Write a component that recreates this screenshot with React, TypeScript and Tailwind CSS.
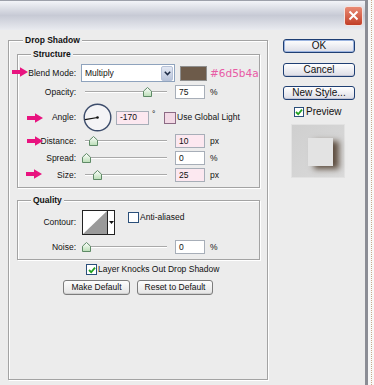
import React from "react";

const font = { fontFamily: '"Liberation Sans", Arial, sans-serif' };

function Arrow({ className }: { className: string }) {
  return (
    <svg className={`absolute ${className}`} width="16" height="10" viewBox="0 0 16 10">
      <path d="M0 3 H8 V0.2 L16 5 L8 9.8 V7 H0 Z" fill="#e8137f" />
    </svg>
  );
}

function Legend({ text, left }: { text: string; left: string }) {
  return (
    <span className={`absolute top-[-7px] ${left} px-[2px] bg-[#ececec] text-[8.5px] font-bold leading-[12px] text-[#111]`}>
      {text}
    </span>
  );
}

function Label({ text }: { text: string }) {
  return <span className="w-[58px] shrink-0 text-right text-[8.5px] leading-none text-[#111]">{text}</span>;
}

function Slider({ thumb }: { thumb: number }) {
  return (
    <div className="relative ml-[5px] h-[14px] w-[90px] shrink-0">
      <div className="absolute left-[4px] right-[4px] top-[6px] h-[2px] border-t border-[#a9a9a9] bg-white" />
      <svg className="absolute top-[2px]" style={{ left: thumb - 4 }} width="9" height="10" viewBox="0 0 9 10">
        <defs>
          <linearGradient id="tg" x1="0" y1="0" x2="0" y2="1">
            <stop offset="0" stopColor="#ffffff" />
            <stop offset="1" stopColor="#b9ddb5" />
          </linearGradient>
        </defs>
        <path d="M4.5 0.5 L8.5 4.2 V9.5 H0.5 V4.2 Z" fill="url(#tg)" stroke="#5e8a66" strokeWidth="1" />
      </svg>
    </div>
  );
}

function NumInput({ value, w, pink }: { value: string; w: string; pink?: boolean }) {
  return (
    <div
      className={`ml-[4px] flex h-[14px] ${w} shrink-0 items-center border border-[#a7aeb8] pl-[3px] text-[8.5px] leading-none text-[#111] ${
        pink ? "bg-[#fce8f0]" : "bg-white"
      }`}
    >
      {value}
    </div>
  );
}

function Unit({ text }: { text: string }) {
  return <span className="ml-[5px] text-[8.5px] leading-none text-[#111]">{text}</span>;
}

function Check({ checked, pink, size }: { checked?: boolean; pink?: boolean; size: string }) {
  return (
    <span
      className={`${size} shrink-0 flex items-center justify-center border ${
        pink ? "border-[#8c6a84] bg-[#f2d9e5]" : "border-[#2a4f7a] bg-white"
      }`}
    >
      {checked && (
        <svg width="8" height="8" viewBox="0 0 8 8">
          <path d="M1 4 L3.2 6.2 L7 1.6" fill="none" stroke="#21a121" strokeWidth="1.8" />
        </svg>
      )}
    </span>
  );
}

function XpButton({ text, mt, primary }: { text: string; mt: string; primary?: boolean }) {
  return (
    <div
      className={`${mt} flex h-[14px] w-[72px] items-center justify-center rounded-[3px] border border-[#1f3f73] bg-gradient-to-b from-white to-[#dcdde6] text-[10px] leading-none text-[#111] ${
        primary ? "shadow-[inset_0_0_0_1px_#9bb4e0]" : "shadow-[inset_0_-1px_0_#c3c6d6]"
      }`}
    >
      {text}
    </div>
  );
}

function GrayButton({ text, w, ml }: { text: string; w: string; ml?: string }) {
  return (
    <div
      className={`${ml ?? ""} flex h-[15px] ${w} items-center justify-center rounded-[3px] border border-[#7c7c7c] bg-gradient-to-b from-[#fdfdfd] to-[#e4e4e4] text-[8.5px] leading-none text-[#111] shadow-[inset_0_-1px_0_#cfcfcf]`}
    >
      {text}
    </div>
  );
}

export default function App() {
  return (
    <div className="relative flex h-[385px] w-[374px] overflow-hidden bg-[#ececec]" style={font}>
      {/* Fenêtre */}
      <div className="flex h-full w-[368px] flex-col border-r-[3px] border-[#8b8d95]">
        {/* Barre de titre */}
        <div className="flex h-[30px] items-center justify-end border-t border-[#9da0aa] bg-gradient-to-b from-[#f3f4f8] via-[#c7cad5] to-[#e9ebf0] pr-[2px]">
          <div className="flex h-[20px] w-[19px] items-center justify-center rounded-[3px] border border-[#f3e3e0] bg-gradient-to-b from-[#e98a74] to-[#c13d26]">
            <svg width="11" height="11" viewBox="0 0 11 11">
              <path d="M1.5 1.5 L9.5 9.5 M9.5 1.5 L1.5 9.5" stroke="#fff" strokeWidth="2" />
            </svg>
          </div>
        </div>

        <div className="flex pl-[8px] pt-[10px]">
          {/* Drop Shadow */}
          <div className="relative h-[340px] w-[260px] shrink-0 border border-[#a3a3a3] px-[8px] pt-[13px] shadow-[inset_1px_1px_0_#fff,1px_1px_0_#fff]">
            <Legend text="Drop Shadow" left="left-[14px]" />

            {/* Structure */}
            <div className="relative ml-[0px] w-[243px] border border-[#a3a3a3] pb-[5px] pt-[9px] shadow-[inset_1px_1px_0_#fff,1px_1px_0_#fff]">
              <Legend text="Structure" left="left-[13px]" />

              <div className="flex h-[18px] items-center">
                <Label text="Blend Mode:" />
                <div className="ml-[5px] flex h-[18px] w-[94px] shrink-0 items-center justify-between border border-[#8fa3bd] bg-white pl-[3px] pr-px">
                  <span className="text-[8.5px] leading-none text-[#111]">Multiply</span>
                  <span className="flex h-[15px] w-[12px] items-center justify-center rounded-[2px] border border-[#b7c2d8] bg-gradient-to-b from-[#e3e8f3] to-[#b9c4da]">
                    <svg width="7" height="5" viewBox="0 0 7 5">
                      <path d="M0.8 0.8 L3.5 3.6 L6.2 0.8" fill="none" stroke="#1c2a44" strokeWidth="1.5" />
                    </svg>
                  </span>
                </div>
                <span className="ml-[5px] h-[15px] w-[27px] shrink-0 border border-[#8f8f8f] bg-[#6d5b4a]" />
                <span
                  className="ml-[3px] whitespace-nowrap text-[10.5px] leading-none text-[#e85ba5]"
                  style={{ fontFamily: '"DejaVu Sans", Verdana, sans-serif' }}
                >
                  #6d5b4a
                </span>
              </div>

              <div className="mt-[3px] flex h-[14px] items-center">
                <Label text="Opacity:" />
                <Slider thumb={66} />
                <NumInput value="75" w="w-[30px]" />
                <Unit text="%" />
              </div>

              <div className="mt-[4px] flex h-[29px] items-center">
                <Label text="Angle:" />
                <svg className="ml-[7px] shrink-0" width="29" height="29" viewBox="0 0 29 29">
                  <circle cx="14.5" cy="14.5" r="13.3" fill="#f4f4f6" stroke="#3d4d6c" strokeWidth="1.4" />
                  <path d="M14.5 14.5 L2 16.7" stroke="#111" strokeWidth="1.2" />
                  <circle cx="14.5" cy="14.5" r="1.3" fill="#111" />
                </svg>
                <NumInput value="-170" w="w-[33px]" pink />
                <span className="ml-[3px] w-[5px] self-start pt-[7px] text-[8.5px] leading-none text-[#111]">°</span>
                <span className="ml-[7px] flex items-center">
                  <Check pink size="h-[12px] w-[12px]" />
                  <span className="ml-px text-[8.5px] leading-none text-[#111]">Use Global Light</span>
                </span>
              </div>

              <div className="mt-[2px] flex h-[14px] items-center">
                <Label text="Distance:" />
                <Slider thumb={12} />
                <NumInput value="10" w="w-[30px]" pink />
                <Unit text="px" />
              </div>

              <div className="mt-[3px] flex h-[14px] items-center">
                <Label text="Spread:" />
                <Slider thumb={5} />
                <NumInput value="0" w="w-[30px]" />
                <Unit text="%" />
              </div>

              <div className="mt-[3px] flex h-[14px] items-center">
                <Label text="Size:" />
                <Slider thumb={16} />
                <NumInput value="25" w="w-[30px]" pink />
                <Unit text="px" />
              </div>
            </div>

            {/* Quality */}
            <div className="relative mt-[12px] w-[243px] border border-[#a3a3a3] pb-[5px] pt-[9px] shadow-[inset_1px_1px_0_#fff,1px_1px_0_#fff]">
              <Legend text="Quality" left="left-[13px]" />

              <div className="flex h-[25px] items-center">
                <Label text="Contour:" />
                <div className="ml-[6px] flex h-[25px] w-[33px] shrink-0 border border-[#222]">
                  <svg width="24" height="23" viewBox="0 0 24 23" className="shrink-0">
                    <rect width="24" height="23" fill="#fff" />
                    <path d="M0 23 L24 0 V23 Z" fill="#9a9a9a" />
                  </svg>
                  <span className="flex flex-1 items-center justify-center border-l border-[#222] bg-white">
                    <svg width="5" height="3" viewBox="0 0 5 3">
                      <path d="M0 0 H5 L2.5 3 Z" fill="#111" />
                    </svg>
                  </span>
                </div>
                <span className="ml-[13px] flex items-center self-start pt-[2px]">
                  <Check size="h-[11px] w-[11px]" />
                  <span className="ml-px text-[8.5px] leading-none text-[#111]">Anti-aliased</span>
                </span>
              </div>

              <div className="mt-[5px] flex h-[14px] items-center">
                <Label text="Noise:" />
                <Slider thumb={5} />
                <NumInput value="0" w="w-[30px]" />
                <Unit text="%" />
              </div>
            </div>

            <div className="mt-[4px] flex h-[11px] items-center pl-[69px]">
              <Check checked size="h-[11px] w-[11px]" />
              <span className="ml-px whitespace-nowrap text-[8.5px] leading-none text-[#111]">Layer Knocks Out Drop Shadow</span>
            </div>

            <div className="mt-[5px] flex pl-[46px]">
              <GrayButton text="Make Default" w="w-[67px]" />
              <GrayButton text="Reset to Default" w="w-[76px]" ml="ml-[7px]" />
            </div>
          </div>

          {/* Colonne de droite */}
          <div className="ml-[15px] mt-[-1px] flex w-[72px] flex-col">
            <XpButton text="OK" mt="mt-0" primary />
            <XpButton text="Cancel" mt="mt-[10px]" />
            <XpButton text="New Style..." mt="mt-[9px]" />
            <div className="mt-[7px] flex h-[10px] items-center pl-[11px]">
              <Check checked size="h-[10px] w-[10px]" />
              <span className="ml-[2px] text-[10px] leading-none text-[#111]">Preview</span>
            </div>
            <div className="ml-[8px] mt-[7px] flex h-[54px] w-[54px] items-start border border-[#e2e2e2] bg-gradient-to-br from-[#cfcfcf] to-[#dadada] pl-[16px] pt-[13px]">
              <div className="h-[28px] w-[25px] bg-[#e3e3e3] shadow-[6px_3px_6px_#5e4e40]" />
            </div>
          </div>
        </div>
      </div>

      {/* Bord pointillé */}
      <div className="flex h-full w-[6px] justify-center bg-[#f7f7f7]">
        <div className="h-full border-l border-dotted border-[#c9a98a]" />
      </div>

      {/* Flèches d'annotation */}
      <Arrow className="left-[12px] top-[67px]" />
      <Arrow className="left-[27px] top-[113px]" />
      <Arrow className="left-[27px] top-[136px]" />
      <Arrow className="left-[26px] top-[169px]" />
    </div>
  );
}
